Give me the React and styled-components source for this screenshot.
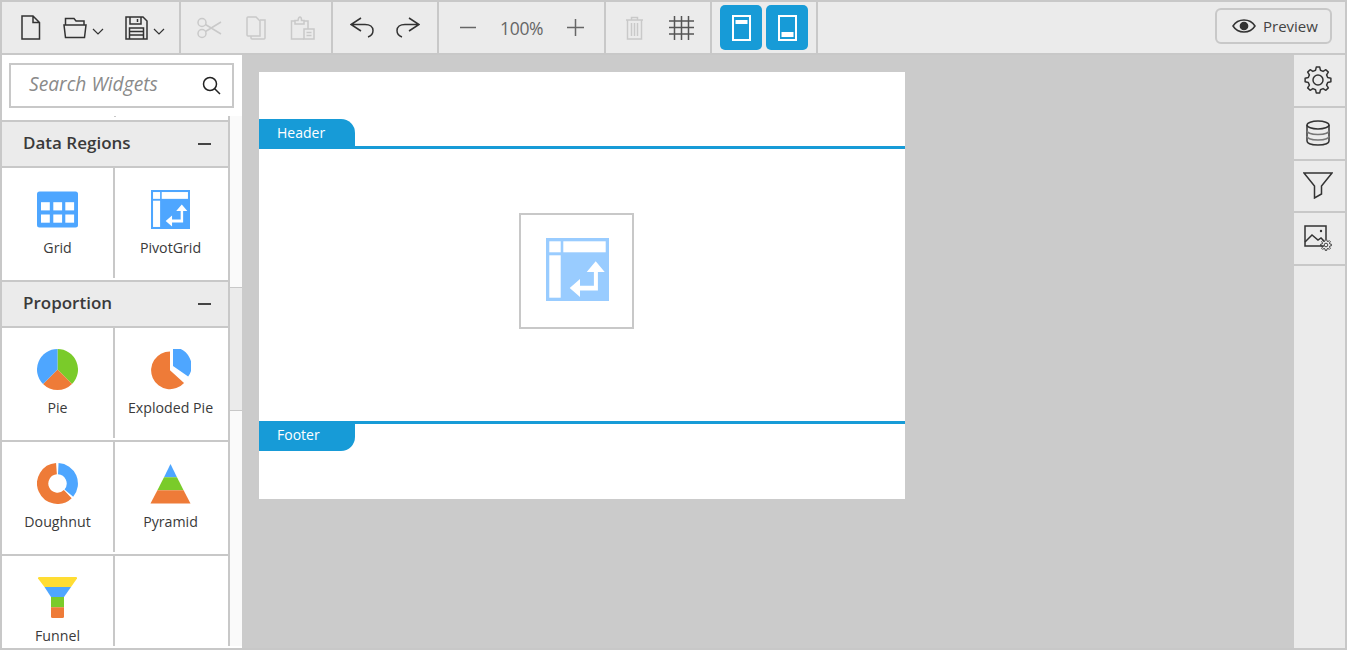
import styled, { createGlobalStyle } from "styled-components";

const line = "#c8c8c8";
const panel = "#ebebeb";
const blue = "#179bd7";
const ink = "#333333";
const off = "#c9c9c9";
const iconBlue = "#4ea6ff";
const orange = "#ee7b38";
const green = "#7acb2a";

const polar = (cx, cy, r, deg) => {
  const a = ((deg - 90) * Math.PI) / 180;
  return [cx + r * Math.cos(a), cy + r * Math.sin(a)];
};

// pie slice, angles in degrees clockwise from the top
const slice = (cx, cy, r, from, to) => {
  const [x1, y1] = polar(cx, cy, r, from);
  const [x2, y2] = polar(cx, cy, r, to);
  return `M${cx} ${cy}L${x1} ${y1}A${r} ${r} 0 ${to - from > 180 ? 1 : 0} 1 ${x2} ${y2}Z`;
};

const arc = (cx, cy, r, from, to) => {
  const [x1, y1] = polar(cx, cy, r, from);
  const [x2, y2] = polar(cx, cy, r, to);
  return `M${x1} ${y1}A${r} ${r} 0 ${to - from > 180 ? 1 : 0} 1 ${x2} ${y2}`;
};

const gear = (cx, cy, outer, inner, teeth) => {
  const step = 360 / teeth;
  let d = "";
  for (let i = 0; i < teeth; i++) {
    const t = i * step;
    const pts = [
      polar(cx, cy, inner, t - step * 0.32),
      polar(cx, cy, outer, t - step * 0.17),
      polar(cx, cy, outer, t + step * 0.17),
      polar(cx, cy, inner, t + step * 0.32),
    ];
    d += pts.map((p, j) => `${i === 0 && j === 0 ? "M" : "L"}${p[0].toFixed(2)} ${p[1].toFixed(2)}`).join("");
  }
  return d + "Z";
};

const Global = createGlobalStyle`
  html, body {
    margin: 0;
    padding: 0;
    background: #fff;
  }
  * {
    box-sizing: border-box;
  }
  body {
    font-family: "Open Sans", "Noto Sans", sans-serif;
    color: ${ink};
  }
`;

const Designer = styled.div`
  width: 1347px;
  height: 650px;
  border: 2px solid ${line};
  display: flex;
  flex-direction: column;
  overflow: hidden;
`;

const Toolbar = styled.div`
  height: 53px;
  flex: none;
  display: flex;
  background: ${panel};
  border-bottom: 2px solid ${line};
`;

const ToolGroup = styled.div`
  width: ${(p) => p.$w}px;
  padding-left: ${(p) => p.$pad}px;
  display: flex;
  align-items: center;
  gap: ${(p) => p.$gap}px;
  border-right: 2px solid ${line};
`;

const Ico = styled.svg`
  display: block;
  flex: none;
  fill: none;
  stroke: ${(p) => (p.$off ? off : ink)};
  stroke-width: 1.5;
`;

const DropIcon = styled.div`
  display: flex;
  align-items: center;
  gap: 5px;
`;

const Chevron = styled(Ico)`
  margin-top: 7px;
  stroke-width: 1.2;
`;

const ZoomText = styled.span`
  font-size: 17.5px;
  letter-spacing: -0.3px;
  color: #666;
  width: 43px;
  white-space: nowrap;
`;

const BandButton = styled.div`
  width: 42px;
  height: 45px;
  background: ${blue};
  border-radius: 5px;
  display: flex;
  align-items: center;
  justify-content: center;
`;

const PreviewButton = styled.div`
  margin: 6px 13px 0 auto;
  width: 117px;
  height: 36px;
  border: 2px solid ${line};
  border-radius: 6px;
  display: flex;
  align-items: center;
  padding-left: 15px;
  gap: 7px;
  font-size: 15px;
  color: #444;
`;

const Body = styled.div`
  flex: 1;
  min-height: 0;
  display: flex;
`;

const WidgetPanel = styled.div`
  width: 240px;
  flex: none;
  background: #fff;
  display: flex;
  flex-direction: column;
`;

const SearchArea = styled.div`
  height: 61px;
  flex: none;
  padding: 8px 0 0 7px;
`;

const SearchBox = styled.div`
  width: 225px;
  height: 45px;
  border: 2px solid ${line};
  display: flex;
  align-items: center;
  justify-content: space-between;
  padding: 0 11px 0 18px;
  font-size: 19.2px;
  font-style: italic;
  color: #8a8a8a;
  span {
    padding-bottom: 4px;
  }
`;

const ListArea = styled.div`
  flex: 1;
  min-height: 0;
  display: flex;
`;

const WidgetList = styled.div`
  width: 228px;
  height: 530px;
  overflow: hidden;
  border-right: 2px solid ${line};
`;

const ClippedRow = styled.div`
  height: 4px;
  display: flex;
  justify-content: center;
  padding-right: 1px;
  &::after {
    content: "";
    width: 2px;
    height: 1px;
    background: ${line};
  }
`;

const Track = styled.div`
  width: 12px;
  height: 530px;
  background: #fafafa;
`;

const Thumb = styled.div`
  margin-top: 171px;
  height: 124px;
  background: ${panel};
  border-top: 1px solid ${line};
  border-bottom: 1px solid ${line};
`;

const GroupHead = styled.div`
  height: 48px;
  background: ${panel};
  border-top: 2px solid ${line};
  border-bottom: 2px solid ${line};
  display: flex;
  align-items: center;
  justify-content: space-between;
  padding: 0 17px 0 21px;
  font-size: 17px;
  font-weight: 600;
  color: #3a3a3a;
  span:first-child {
    padding-bottom: 3px;
  }
`;

const Collapse = styled.span`
  width: 13px;
  height: 2px;
  background: #444;
`;

const CellRow = styled.div`
  display: grid;
  grid-template-columns: 111px 115px;
  padding-bottom: 2px;
  border-bottom: ${(p) => (p.$last ? "0" : `2px solid ${line}`)};
  &:has(+ ${GroupHead}) {
    border-bottom: 0;
  }
`;

const Cell = styled.div`
  height: 110px;
  padding-top: 21px;
  display: flex;
  flex-direction: column;
  align-items: center;
  & + & {
    border-left: 2px solid ${line};
    padding-right: 2px;
  }
`;

const CellIcon = styled.svg`
  display: block;
  width: 41px;
  height: 41px;
  flex: none;
`;

const PivotSlot = styled.div`
  height: 41px;
  flex: none;
  display: flex;
  align-items: center;
`;

const CellLabel = styled.div`
  margin-top: 8px;
  font-size: 14.2px;
  line-height: 20px;
  color: #3a3a3a;
  white-space: nowrap;
`;

const Canvas = styled.div`
  flex: 1;
  min-width: 0;
  background: #cbcbcb;
  padding: 17px 0 0 17px;
`;

const Sheet = styled.div`
  width: 646px;
  height: 427px;
  background: #fff;
  display: flex;
  flex-direction: column;
`;

const HeaderBand = styled.div`
  height: 77px;
  flex: none;
  display: flex;
  align-items: flex-end;
  border-bottom: 3px solid ${blue};
`;

const FooterBand = styled.div`
  flex: 1;
  border-top: 3px solid ${blue};
`;

const BandTab = styled.div`
  width: 96px;
  height: 27px;
  background: ${blue};
  color: #fff;
  font-size: 14px;
  display: flex;
  align-items: center;
  padding-left: 18px;
  padding-bottom: ${(p) => (p.$foot ? 6 : 0)}px;
  border-top-right-radius: ${(p) => (p.$foot ? 0 : 14)}px;
  border-bottom-right-radius: ${(p) => (p.$foot ? 14 : 0)}px;
`;

const SheetBody = styled.div`
  height: 272px;
  flex: none;
  padding: 64px 0 0 260px;
`;

const DropBox = styled.div`
  width: 115px;
  height: 116px;
  border: 2px solid ${line};
  display: flex;
  align-items: center;
  justify-content: center;
  padding: 0 0 3px 1px;
`;

const PropertyRail = styled.div`
  width: 51px;
  flex: none;
  background: ${panel};
`;

const RailItem = styled.div`
  height: ${(p) => p.$h}px;
  border-bottom: 2px solid ${line};
  display: flex;
  align-items: center;
  justify-content: center;
  padding: 0 3px 2px 0;
`;

const PivotIcon = ({ size, color }) => (
  <svg width={size} height={size} viewBox="0 0 63 63" style={{ display: "block", flex: "none" }}>
    <rect width="63" height="63" fill={color} />
    <g fill="#fff">
      <rect x="3.3" y="3.3" width="11.4" height="11" />
      <rect x="17.3" y="3.3" width="42.4" height="11" />
      <rect x="3.3" y="17.3" width="11.4" height="42.4" />
      <path d="M49.7 23.3L58.7 34H51.9V52.6H34V59L23.7 50L34 41V47.7H47.9V34H40.7Z" />
    </g>
  </svg>
);

const widgetIcons = {
  Grid: (
    <CellIcon viewBox="0 0 41 41">
      <rect y="2.5" width="41" height="36" rx="2.5" fill={iconBlue} />
      <g fill="#fff">
        {[4, 16.3, 28.3].map((x) =>
          [13.2, 25.5].map((y) => <rect key={`${x}-${y}`} x={x} y={y} width="8.8" height="8.2" />)
        )}
      </g>
    </CellIcon>
  ),
  PivotGrid: (
    <PivotSlot>
      <PivotIcon size={39} color={iconBlue} />
    </PivotSlot>
  ),
  Pie: (
    <CellIcon viewBox="0 0 41 41">
      <path d={slice(20.5, 20.5, 20.5, 0, 135)} fill={green} />
      <path d={slice(20.5, 20.5, 20.5, 135, 225)} fill={orange} />
      <path d={slice(20.5, 20.5, 20.5, 225, 360)} fill={iconBlue} />
    </CellIcon>
  ),
  "Exploded Pie": (
    <CellIcon viewBox="0 0 41 41">
      <path d={slice(20, 21.3, 18.9, 132, 360)} fill={orange} />
      <path d={slice(23, 17, 18.5, 0, 125)} fill={iconBlue} />
    </CellIcon>
  ),
  Doughnut: (
    <CellIcon viewBox="0 0 41 41" fill="none" strokeWidth="11.3">
      <path d={arc(20.5, 20.5, 14.8, 3, 130)} stroke={iconBlue} />
      <path d={arc(20.5, 20.5, 14.8, 136, 356)} stroke={orange} />
    </CellIcon>
  ),
  Pyramid: (
    <CellIcon viewBox="0 0 41 41">
      <path d="M20.5 1L27 14.2H14Z" fill={iconBlue} />
      <path d="M14 14.2H27L33.6 27.2H7.4Z" fill={green} />
      <path d="M7.4 27.2H33.6L40.5 40.5H.5Z" fill={orange} />
    </CellIcon>
  ),
  Funnel: (
    <CellIcon viewBox="0 0 41 41">
      <path d="M2 0H39Q40.5 0 40 1.5L34 10H7.5L1 1.5Q.7 0 2 0Z" fill="#ffdd33" />
      <path d="M7.5 10H34L27 20H14Z" fill={iconBlue} />
      <rect x="14" y="20" width="13" height="10.3" fill={green} />
      <path d="M14 30.3H27V39.5Q27 41 25.5 41H15.5Q14 41 14 39.5Z" fill={orange} />
    </CellIcon>
  ),
};

const Widget = ({ name }) => (
  <Cell>
    {name && widgetIcons[name]}
    {name && <CellLabel>{name}</CellLabel>}
  </Cell>
);

const App = () => {
  return (
    <Designer>
      <Global />
      <Toolbar>
        <ToolGroup $w={179} $pad={19} $gap={21}>
          <Ico width="21" height="25" viewBox="0 0 21 25">
            <path d="M1 1H12L18.5 7.5V24H1ZM12 1V7.5H18.5" />
          </Ico>
          <DropIcon>
            <Ico width="24" height="23" viewBox="0 0 24 23">
              <path d="M2.5 9V2.5H11L13 5H21V9" />
              <path d="M1 9H23L21.5 21.5H2.5Z" />
            </Ico>
            <Chevron width="12" height="7" viewBox="0 0 12 7">
              <path d="M1 1L6 6L11 1" />
            </Chevron>
          </DropIcon>
          <DropIcon>
            <Ico width="23" height="24" viewBox="0 0 23 24">
              <path d="M1 1H18L22 5V23H1Z" />
              <path d="M5 1V8H16V1M12.5 3V6" />
              <path d="M4.5 23V12H18.5V23M4.5 15.5H18.5M4.5 19H18.5" />
            </Ico>
            <Chevron width="12" height="7" viewBox="0 0 12 7">
              <path d="M1 1L6 6L11 1" />
            </Chevron>
          </DropIcon>
        </ToolGroup>
        <ToolGroup $w={152} $pad={16} $gap={24}>
          <Ico $off width="25" height="22" viewBox="0 0 25 22">
            <circle cx="5" cy="5.5" r="4" />
            <circle cx="5" cy="16.5" r="4" />
            <path d="M8.5 7.5L24 17M8.5 14.5L24 5" />
          </Ico>
          <Ico $off width="20" height="24" viewBox="0 0 20 24">
            <path d="M2 1H10L14 5V20H2Q1 20 1 19V2Q1 1 2 1Z" />
            <path d="M14 4H19V22Q19 23 18 23H6Q5 23 5 22V20" />
          </Ico>
          <Ico $off width="25" height="24" viewBox="0 0 25 24">
            <path d="M5 5H1.5V23H14" />
            <path d="M18 13V5H14" />
            <path d="M5 8V4.5H8Q8.5 1 10 1T11.5 4.5H14V8Z" />
            <path d="M14 13H24V23H14ZM16.5 16.5H21.5M16.5 19.5H21.5" />
          </Ico>
        </ToolGroup>
        <ToolGroup $w={106} $pad={17} $gap={22}>
          <Ico width="24" height="21" viewBox="0 0 24 21">
            <path d="M11 1L1 7.5L11 14M1 7.5H15C20 7.5 23 10 23 13.5C23 16.5 21 19 18 20" />
          </Ico>
          <Ico width="24" height="21" viewBox="0 0 24 21">
            <path d="M13 1L23 7.5L13 14M23 7.5H9C4 7.5 1 10 1 13.5C1 16.5 3 19 6 20" />
          </Ico>
        </ToolGroup>
        <ToolGroup $w={167} $pad={21} $gap={24}>
          <Ico width="16" height="17" viewBox="0 0 16 17" style={{ stroke: "#666" }}>
            <path d="M0 8.5H16" />
          </Ico>
          <ZoomText>100%</ZoomText>
          <Ico width="17" height="17" viewBox="0 0 17 17" style={{ stroke: "#666" }}>
            <path d="M0 8.5H17M8.5 0V17" />
          </Ico>
        </ToolGroup>
        <ToolGroup $w={106} $pad={19} $gap={25}>
          <Ico $off width="19" height="24" viewBox="0 0 19 24">
            <path d="M1 4H18M6.5 4V1.5H12.5V4" />
            <path d="M2.5 4V23H16.5V4" />
            <path d="M6.5 7V20M9.5 7V20M12.5 7V20" />
          </Ico>
          <Ico width="25" height="24" viewBox="0 0 25 24" style={{ stroke: "#555" }}>
            <path d="M5.5 0V24M12.5 0V24M19.5 0V24M0 5H25M0 11.5H25M0 18H25" />
          </Ico>
        </ToolGroup>
        <ToolGroup $w={106} $pad={8} $gap={4}>
          <BandButton>
            <svg width="19" height="26" viewBox="0 0 19 26">
              <path d="M1 1H18V25H1Z" fill="none" stroke="#fff" strokeWidth="2" />
              <rect x="3.5" y="5" width="12" height="4" fill="#fff" />
            </svg>
          </BandButton>
          <BandButton>
            <svg width="19" height="26" viewBox="0 0 19 26">
              <path d="M1 1H18V25H1Z" fill="none" stroke="#fff" strokeWidth="2" />
              <rect x="3.5" y="17" width="12" height="5" fill="#fff" />
            </svg>
          </BandButton>
        </ToolGroup>
        <PreviewButton>
          <Ico width="24" height="14" viewBox="0 0 24 14">
            <path d="M1 7C6 -1 18 -1 23 7C18 15 6 15 1 7Z" />
            <circle cx="12" cy="7" r="3.6" fill={ink} />
          </Ico>
          Preview
        </PreviewButton>
      </Toolbar>
      <Body>
        <WidgetPanel>
          <SearchArea>
            <SearchBox>
              <span>Search Widgets</span>
              <Ico width="19" height="19" viewBox="0 0 19 19" style={{ stroke: "#222" }}>
                <circle cx="8" cy="8" r="6.5" />
                <path d="M12.7 12.7L18 18" />
              </Ico>
            </SearchBox>
          </SearchArea>
          <ListArea>
            <WidgetList>
              <ClippedRow />
              <GroupHead>
                <span>Data Regions</span>
                <Collapse />
              </GroupHead>
              <CellRow>
                <Widget name="Grid" />
                <Widget name="PivotGrid" />
              </CellRow>
              <GroupHead>
                <span>Proportion</span>
                <Collapse />
              </GroupHead>
              <CellRow>
                <Widget name="Pie" />
                <Widget name="Exploded Pie" />
              </CellRow>
              <CellRow>
                <Widget name="Doughnut" />
                <Widget name="Pyramid" />
              </CellRow>
              <CellRow $last>
                <Widget name="Funnel" />
                <Widget />
              </CellRow>
            </WidgetList>
            <Track>
              <Thumb />
            </Track>
          </ListArea>
        </WidgetPanel>
        <Canvas>
          <Sheet>
            <HeaderBand>
              <BandTab>Header</BandTab>
            </HeaderBand>
            <SheetBody>
              <DropBox>
                <PivotIcon size={63} color="#99ccff" />
              </DropBox>
            </SheetBody>
            <FooterBand>
              <BandTab $foot>Footer</BandTab>
            </FooterBand>
          </Sheet>
        </Canvas>
        <PropertyRail>
          <RailItem $h={53}>
            <Ico width="28" height="28" viewBox="0 0 28 28" strokeLinejoin="round" strokeWidth="1.3">
              <path d={gear(14, 14, 13, 10, 8)} />
              <circle cx="14" cy="14" r="5" />
            </Ico>
          </RailItem>
          <RailItem $h={53}>
            <Ico width="24" height="26" viewBox="0 0 24 26">
              <ellipse cx="12" cy="5" rx="11" ry="4" />
              <path d="M1 5V21C1 23.5 6 25 12 25S23 23.5 23 21V5" />
              <path d="M1 10.5C1 13 6 14.5 12 14.5S23 13 23 10.5M1 16C1 18.5 6 20 12 20S23 18.5 23 16" stroke="#777" />
            </Ico>
          </RailItem>
          <RailItem $h={52}>
            <Ico width="30" height="27" viewBox="0 0 30 27">
              <path d="M1 1H29L18.5 14V22L11.5 26V14Z" />
            </Ico>
          </RailItem>
          <RailItem $h={53}>
            <Ico width="28" height="26" viewBox="0 0 28 26" strokeWidth="1.2">
              <path d="M20 21H1V1H22V14" />
              <path d="M1 17L8 10L14 15L17 13L20 16" />
              <circle cx="17" cy="6" r="1.2" fill={ink} stroke="none" />
              <path d={gear(22, 20, 5.5, 4, 8)} strokeWidth="0.9" />
              <circle cx="22" cy="20" r="1.8" strokeWidth="0.9" />
            </Ico>
          </RailItem>
        </PropertyRail>
      </Body>
    </Designer>
  );
};

export default App;
